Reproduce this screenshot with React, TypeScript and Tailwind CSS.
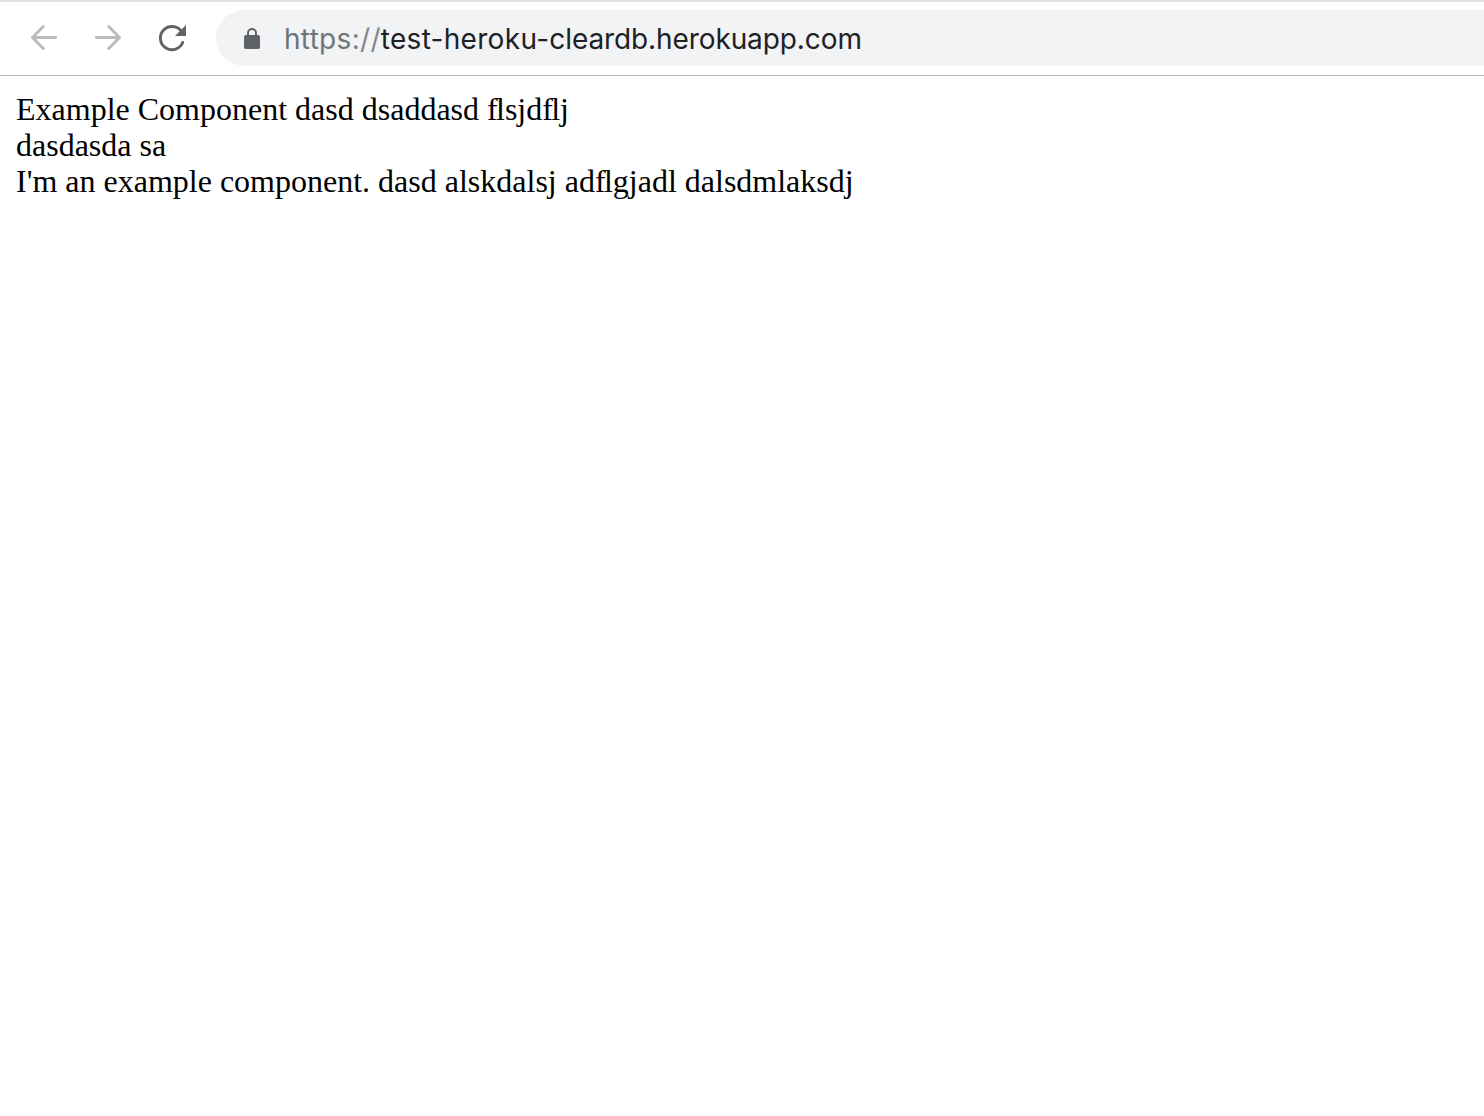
import React from "react";

function ArrowIcon({ flipped = false }: { flipped?: boolean }) {
  return (
    <svg width="32" height="32" viewBox="0 0 32 32" fill="none" stroke="#babbbc" strokeWidth="2.9" strokeLinecap="round" strokeLinejoin="round" className={flipped ? "-scale-x-100" : ""}>
      <path d="M27.6 15.5H4.6M15.3 4.6 4.5 15.5l10.8 10.9" />
    </svg>
  );
}

function ReloadIcon() {
  return (
    <svg width="32" height="32" viewBox="0 0 32 32" fill="none">
      <path d="M25.2 9A11.6 11.6 0 1 0 26.8 20.3" stroke="#5f6368" strokeWidth="2.9" strokeLinecap="round" />
      <path d="M30 3v11H19z" fill="#5f6368" />
    </svg>
  );
}

function LockIcon() {
  return (
    <svg width="18" height="22" viewBox="0 0 18 22" fill="none">
      <rect x="1" y="7" width="16" height="14" rx="1.8" fill="#5f6368" />
      <path d="M5 8V5a4 4 0 0 1 8 0v3" stroke="#5f6368" strokeWidth="2" />
    </svg>
  );
}

// An f set tightly against the letter that follows it.
function TightF() {
  return <span className="tracking-[-1.7px]">f</span>;
}

export default function App() {
  return (
    <div className="h-[1116px] overflow-hidden bg-white">
      <header className="flex h-[76px] items-start border-t-2 border-b border-t-[#dee1e6] border-b-[#b6b4b6] pt-2 pl-7">
        <div className="flex h-14 items-center gap-8">
          <ArrowIcon />
          <ArrowIcon flipped />
          <ReloadIcon />
        </div>
        <div className="ml-7 flex h-14 flex-1 items-center rounded-l-full bg-[#f1f3f4] pt-[2px] pl-[27px]">
          <LockIcon />
          <span className="ml-[23px] whitespace-nowrap font-['Inter',sans-serif] text-[28px] leading-8 tracking-[0.3px] text-[#202124]">
            <span className="text-[#6f7479]">https</span>
            <span className="text-[#80868b]">://</span>test-heroku-<span className="tracking-[-0.1px]">cleardb.herokuapp.com</span>
          </span>
        </div>
      </header>
      <main className="px-4 pt-[15px] font-['Liberation_Serif',serif] text-[32px] leading-9 text-black">
        <div>Example Component dasd dsaddasd <TightF />lsjd<TightF />lj</div>
        <div>dasdasda sa</div>
        <div>I'm an example component. dasd alskdalsj ad<TightF />lgjadl dalsdmlaksdj</div>
      </main>
    </div>
  );
}
